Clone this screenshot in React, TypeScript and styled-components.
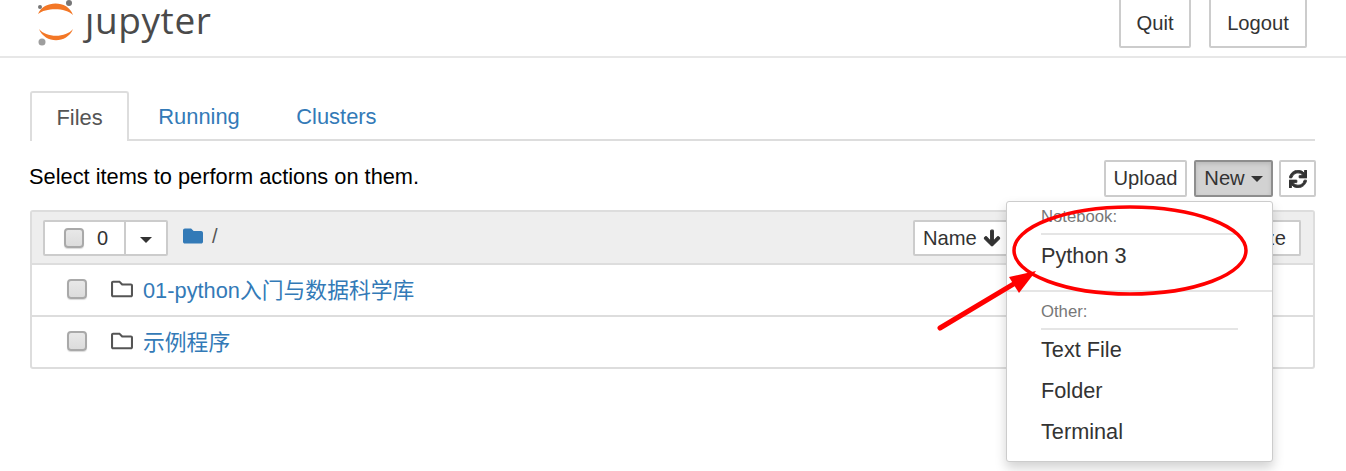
import React from "react";
import styled, { createGlobalStyle } from "styled-components";
import { FaArrowDown, FaFolder, FaRegFolder, FaSync } from "react-icons/fa";

const Global = createGlobalStyle`
  html, body { margin: 0; padding: 0; background: #fff; overflow: hidden; }
  body { font-family: "Liberation Sans", "Noto Sans CJK SC", sans-serif; font-size: 20px; color: #000; }
  * { box-sizing: border-box; }
`;

const Page = styled.div`position: relative; width: 1346px; height: 471px; overflow: hidden;`;

const Header = styled.header`
  height: 58px; border-bottom: 2px solid #e7e7e7;
  display: flex; justify-content: space-between; align-items: flex-start;
  padding: 0 39px 0 36px;
`;
const Logo = styled.div`display: flex; align-items: flex-start; gap: 9px;`;
const LogoWord = styled.span`
  font-family: "Open Sans", sans-serif; font-size: 37px; line-height: 39px; color: #4a4a4a;
  letter-spacing: 0.6px; font-weight: 400; display: block; height: 44px;
`;
const HeaderButtons = styled.div`display: flex; gap: 18px; margin-top: -4px;`;
const HeaderButton = styled.button<{ $w: number }>`
  width: ${p => p.$w}px; height: 52px; padding: 2px 0 0; background: #fff;
  border: 2px solid #ccc; border-radius: 2px; color: #333;
  font: 20.2px "Liberation Sans", sans-serif;
`;

const Main = styled.main`padding: 33px 31px 0 30px;`;
const Tabs = styled.nav`display: flex; height: 50px; border-bottom: 2px solid #ddd;`;
const Tab = styled.a<{ $active?: boolean }>`
  height: 50px; padding: 0 27.5px; margin-left: 1.5px; line-height: 52px; font-size: 21.9px; color: #337ab7;
  ${p => (p.$active ? "margin-left:0;padding:0 24.5px;color:#555;background:#fff;border:2px solid #ddd;border-bottom:0;border-radius:3px 3px 0 0;line-height:50px;" : "")}
`;
const Toolbar = styled.div`display: flex; justify-content: space-between; align-items: flex-start; padding-top: 19px; height: 69px;`;
const Hint = styled.span`font-size: 21.8px; line-height: 34px; margin-left: -1px;`;
const Actions = styled.div`display: flex; margin-right: -1px;`;
const ActionButton = styled.button<{ $w: number; $on?: boolean; $gap?: number }>`
  width: ${p => p.$w}px; height: 37px; margin-left: ${p => p.$gap ?? 0}px; padding: 0;
  display: flex; align-items: center; justify-content: center; gap: 6px;
  background: ${p => (p.$on ? "#d2d2d2" : "#fff")}; border: 2px solid ${p => (p.$on ? "#8e8e8e" : "#ccc")};
  border-radius: 2px; color: #333; font: 20.2px "Liberation Sans", sans-serif;
  box-shadow: ${p => (p.$on ? "inset 0 2px 4px rgba(0,0,0,.12)" : "none")};
`;
const Caret = styled.i`
  display: inline-block; width: 0; height: 0; border-top: 6px solid #333;
  border-left: 6.5px solid transparent; border-right: 6.5px solid transparent;
`;

const Panel = styled.section`border: 2px solid #ddd; border-radius: 3px; background: #fff;`;
const PanelHead = styled.div`
  height: 53px; background: #eee; border-bottom: 2px solid #ddd; display: flex; align-items: flex-start;
  padding: 8px 12px 0 11px;
`;
const SelectGroup = styled.div`
  display: flex; width: 125px; height: 36px; background: #fff; border: 2px solid #ccc; border-radius: 2px;
`;
const SelectCount = styled.div`
  width: 81px; display: flex; align-items: center; gap: 13px; padding-left: 19px; border-right: 2px solid #ccc;
  color: #333; font-size: 20px;
`;
const SelectCaret = styled.div`flex: 1; display: flex; align-items: center; justify-content: center; padding-top: 3px;`;
const Box = styled.span`
  display: block; width: 20px; height: 20px; flex: none; background: linear-gradient(#e8e8e8, #dcdcdc);
  border: 2px solid #a9a9a9; border-radius: 4px; box-shadow: 0 1px 1px rgba(0,0,0,.15);
`;
const Crumb = styled.div`
  display: flex; align-items: center; gap: 9px; margin-left: 15px; height: 32px; color: #555; font-size: 20px;
  svg { color: #337ab7; width: 20px; height: 20px; }
`;
const Sort = styled.div`margin-left: auto; display: flex;`;
const SortButton = styled.button<{ $w: number }>`
  width: ${p => p.$w}px; height: 36px; background: #fff; border: 2px solid #ccc; border-left-width: ${p => (p.$w > 200 ? 0 : 2)}px;
  border-radius: 2px; color: #333; font: 20.2px "Liberation Sans", sans-serif; padding: 0 8px;
  display: flex; align-items: center; gap: 6px; justify-content: flex-start;
  svg { stroke: currentColor; stroke-width: 30px; }
`;
const SizeLabel = styled.span`margin-left: auto; margin-right: 5px;`;
const Row = styled.div<{ $last?: boolean }>`
  height: 52px; display: flex; align-items: center; padding: 0 0 2px 35px;
  ${p => (p.$last ? "height: 50px;" : "border-bottom: 2px solid #ddd;")}
`;
const RowIcon = styled.span`
  display: flex; margin-left: 23px; color: #555; svg { width: 24px; height: 22px; }
`;
const RowLink = styled.a`
  margin: -2px 0 0 9px; color: #337ab7; font-size: 21.8px;
  font-family: "Liberation Sans", "Noto Sans CJK SC", sans-serif;
`;

const Menu = styled.div`
  position: absolute; left: 1006px; top: 201px; width: 267px; height: 261px; background: #fff;
  border: 1px solid #ccc; border-radius: 3px; box-shadow: 0 6px 12px rgba(0,0,0,.18);
  padding: 0 34px 0 34px;
`;
const MenuLabel = styled.div<{ $top: number }>`
  margin-top: ${p => p.$top}px; height: 18px; line-height: 18px; color: #777; font-size: 16.7px;
`;
const MenuRule = styled.div<{ $full?: boolean; $top?: number }>`
  height: 2px; background: #e5e5e5; margin-top: ${p => p.$top ?? 7}px;
  ${p => (p.$full ? "margin-left:-34px;margin-right:-34px;" : "")}
`;
const MenuItem = styled.div<{ $h?: number; $lh?: number }>`
  height: ${p => p.$h ?? 41}px; line-height: ${p => p.$lh ?? 39}px; color: #333; font-size: 21.7px;
`;

const Overlay = styled.svg`position: absolute; left: 0; top: 0; pointer-events: none;`;

function LogoMark() {
  return (
    <svg width="40" height="48" viewBox="0 0 40 48">
      <path d="M2 14 C8 0 32 0 37 15 C30 7.5 10 7.5 2 14 Z" fill="#f37726" />
      <path d="M3 29 C9 44 31 44 37 29 C30 38 10 38 3 29 Z" fill="#f37726" />
      <circle cx="33" cy="3" r="3" fill="#767677" />
      <circle cx="4" cy="7" r="2" fill="#767677" />
      <circle cx="6" cy="42" r="3.5" fill="#9e9e9e" />
    </svg>
  );
}

export default function App() {
  return (
    <Page>
      <Global />
      <Header>
        <Logo>
          <LogoMark />
          <LogoWord>ȷupyter</LogoWord>
        </Logo>
        <HeaderButtons>
          <HeaderButton $w={72}>Quit</HeaderButton>
          <HeaderButton $w={98}>Logout</HeaderButton>
        </HeaderButtons>
      </Header>
      <Main>
        <Tabs>
          <Tab $active>Files</Tab>
          <Tab>Running</Tab>
          <Tab>Clusters</Tab>
        </Tabs>
        <Toolbar>
          <Hint>Select items to perform actions on them.</Hint>
          <Actions>
            <ActionButton $w={83}>Upload</ActionButton>
            <ActionButton $w={79} $gap={7} $on>New <Caret /></ActionButton>
            <ActionButton $w={37} $gap={6}><FaSync size={18} color="#333" stroke="#333" strokeWidth={25} /></ActionButton>
          </Actions>
        </Toolbar>
        <Panel>
          <PanelHead>
            <SelectGroup>
              <SelectCount><Box />0</SelectCount>
              <SelectCaret><Caret /></SelectCaret>
            </SelectGroup>
            <Crumb><FaFolder />/</Crumb>
            <Sort>
              <SortButton $w={120}>Name <FaArrowDown size={18} /></SortButton>
              <SortButton $w={268}><SizeLabel>Size</SizeLabel></SortButton>
            </Sort>
          </PanelHead>
          <Row>
            <Box />
            <RowIcon><FaRegFolder /></RowIcon>
            <RowLink>01-python入门与数据科学库</RowLink>
          </Row>
          <Row $last>
            <Box />
            <RowIcon><FaRegFolder /></RowIcon>
            <RowLink>示例程序</RowLink>
          </Row>
        </Panel>
      </Main>
      <Menu>
        <MenuLabel $top={6}>Notebook:</MenuLabel>
        <MenuRule />
        <MenuItem $h={42} $lh={41}>Python 3</MenuItem>
        <MenuRule $full $top={13} />
        <MenuLabel $top={11}>Other:</MenuLabel>
        <MenuRule />
        <MenuItem>Text File</MenuItem>
        <MenuItem>Folder</MenuItem>
        <MenuItem>Terminal</MenuItem>
      </Menu>
      <Overlay width="1346" height="471" viewBox="0 0 1346 471">
        <ellipse cx="1130" cy="250.5" rx="116" ry="43.5" fill="none" stroke="#f00" strokeWidth="3.5" />
        <path d="M940 328 L1022 279" stroke="#f00" strokeWidth="5" strokeLinecap="round" />
        <path d="M1036 271 L1009 277 L1019 293 Z" fill="#f00" />
      </Overlay>
    </Page>
  );
}
